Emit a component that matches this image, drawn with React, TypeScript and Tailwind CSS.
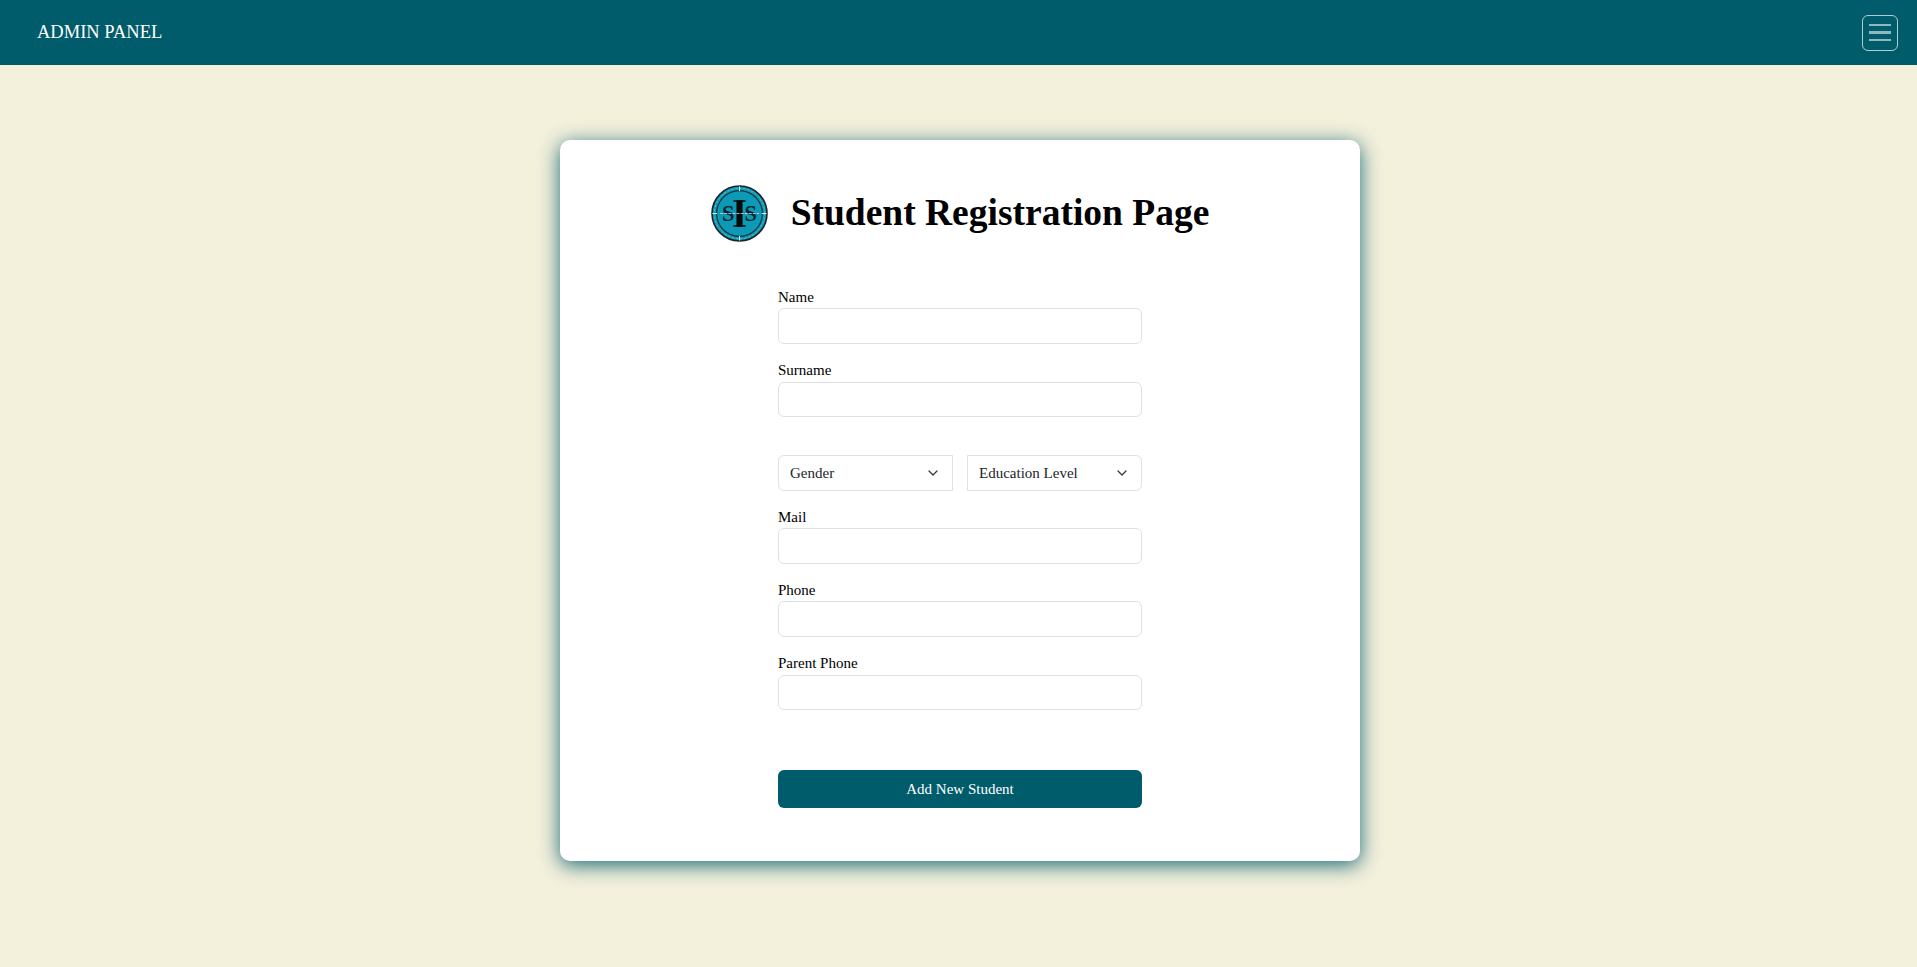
import React from "react";

function Logo() {
  return (
    <svg width="57" height="57" viewBox="0 0 56 56" className="shrink-0">
      <circle cx="28" cy="28" r="27" fill="#0e9cb8" stroke="#1c2326" strokeWidth="1.6" />
      <circle cx="28" cy="28" r="22.5" fill="#0c9ab6" stroke="#0f3540" strokeWidth="1.2" />
      <circle cx="28" cy="28" r="24.8" fill="none" stroke="#6fc9d9" strokeWidth="0.7" strokeDasharray="2 2" />
      <path d="M28 1.5V6M28 50V54.5M1.5 28H6M50 28H54.5" stroke="#d9f0f4" strokeWidth="1" />
      <text x="17" y="35" textAnchor="middle" fontFamily="'Liberation Serif', serif" fontWeight="700" fontSize="22" fill="#06262f">S</text>
      <text x="39" y="35" textAnchor="middle" fontFamily="'Liberation Serif', serif" fontWeight="700" fontSize="22" fill="#06262f">S</text>
      <rect x="25" y="15" width="6" height="26" fill="#0a0a0a" />
      <rect x="22" y="15" width="12" height="1.5" fill="#0a0a0a" />
      <rect x="22" y="39.5" width="12" height="1.5" fill="#0a0a0a" />
      <path d="M9 28H47" stroke="#dfe9eb" strokeWidth="1" strokeDasharray="3 1" opacity="0.75" />
    </svg>
  );
}

function Field({
  label,
  className = "",
  labelClass = "h-[21px]",
  inputClass = "h-[36px]",
}: {
  label: string;
  className?: string;
  labelClass?: string;
  inputClass?: string;
}) {
  return (
    <div className={`flex flex-col ${className}`}>
      <label className={`text-[15px] leading-[21px] text-black ${labelClass}`}>{label}</label>
      <input
        type="text"
        className={`w-full rounded-md border border-[#dee2e6] bg-white px-3 outline-none ${inputClass}`}
      />
    </div>
  );
}

function Select({ label, className }: { label: string; className: string }) {
  return (
    <div className="relative w-[175px]">
      <select
        defaultValue=""
        className={`h-[36px] w-full appearance-none border border-[#dee2e6] bg-white pl-[11px] pr-9 text-[15px] text-[#212529] outline-none ${className}`}
      >
        <option value="">{label}</option>
      </select>
      <svg
        viewBox="0 0 10 6"
        className="pointer-events-none absolute right-[15px] top-[15px] h-[6px] w-[10px]"
        fill="none"
        stroke="#343a40"
        strokeWidth="1.3"
        strokeLinecap="round"
        strokeLinejoin="round"
      >
        <path d="M1 1l4 4 4-4" />
      </svg>
    </div>
  );
}

export default function App() {
  return (
    <div className="min-h-[967px] bg-[#f3f0dc] font-['Liberation_Serif',serif] flex flex-col">
      <nav className="h-[65px] bg-[#005b6a] flex items-center justify-between pl-[37px] pr-[19px]">
        <span className="text-[18.5px] text-white leading-[27px] -mt-[1px]">ADMIN PANEL</span>
        <button className="h-[36px] w-[36px] rounded-md border border-[#ffffffb0] flex flex-col items-center justify-center gap-[5px]">
          <span className="block h-[2.5px] w-[22px] bg-[#ffffff90]" />
          <span className="block h-[2.5px] w-[22px] bg-[#ffffff90]" />
          <span className="block h-[2.5px] w-[22px] bg-[#ffffff90]" />
        </button>
      </nav>
      <main className="flex justify-center pt-[75px] pl-[3px]">
        <div className="w-[800px] h-[721px] rounded-[10px] bg-white shadow-[0_4px_20px_rgba(0,92,107,0.9)] flex flex-col items-center">
          <div className="flex items-center justify-center mt-[45px] h-[57px]">
            <Logo />
            <h1 className="ml-[23px] mb-[2px] text-[37.5px] leading-[48px] font-bold text-black whitespace-nowrap">
              Student Registration Page
            </h1>
          </div>
          <form className="w-[364px] mt-[45px] flex flex-col">
            <Field label="Name" />
            <Field label="Surname" className="mt-[16px]" labelClass="h-[22px]" inputClass="h-[35px]" />
            <div className="flex justify-between mt-[38px]">
              <Select label="Gender" className="rounded-l-md" />
              <Select label="Education Level" className="rounded-r-md" />
            </div>
            <Field label="Mail" className="mt-[16px]" />
            <Field label="Phone" className="mt-[16px]" />
            <Field label="Parent Phone" className="mt-[16px]" labelClass="h-[22px]" inputClass="h-[35px]" />
            <button
              type="button"
              className="mt-[60px] h-[38px] rounded-md bg-[#005b6a] text-[15px] text-white"
            >
              Add New Student
            </button>
          </form>
        </div>
      </main>
    </div>
  );
}
